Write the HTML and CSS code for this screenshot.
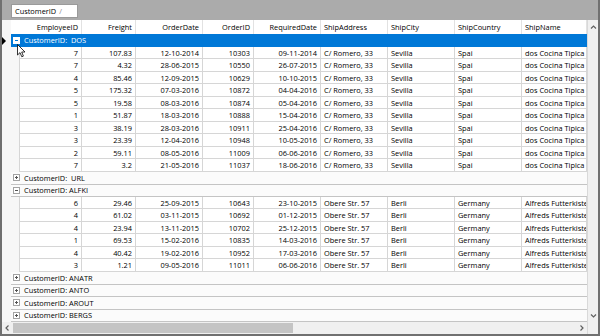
FILE: index.html
```html
<!DOCTYPE html>
<html lang="en">
<head>
  <meta charset="UTF-8">
  <meta name="viewport" content="width=device-width, initial-scale=1.0">
  <title>Orders grid</title>
  <link rel="stylesheet" href="styles.css">
</head>
<body>
  <div class="grid">
    <div class="group-panel">
      <div class="group-chip">CustomerID <span class="sort-mark">/</span></div>
    </div>
    <div class="grid-body">
      <div class="grid-main">
        <div class="rows" id="rows">
          <div class="row header-row">
            <div class="indicator"></div>
            <div class="hcell num first">EmployeeID</div>
            <div class="hcell num">Freight</div>
            <div class="hcell num">OrderDate</div>
            <div class="hcell num">OrderID</div>
            <div class="hcell num">RequiredDate</div>
            <div class="hcell">ShipAddress</div>
            <div class="hcell">ShipCity</div>
            <div class="hcell">ShipCountry</div>
            <div class="hcell">ShipName</div>
          </div>
        </div>
        <div class="hscroll">
          <svg class="arrow" width="11" height="12" viewBox="0 0 11 12"><path d="M6.5 3.5 L4 6 L6.5 8.5" fill="none" stroke="#606060" stroke-width="1.2"/></svg>
          <div class="htrack"><div class="hthumb"></div></div>
          <svg class="arrow" width="11" height="12" viewBox="0 0 11 12"><path d="M4.5 3.5 L7 6 L4.5 8.5" fill="none" stroke="#606060" stroke-width="1.2"/></svg>
        </div>
      </div>
      <div class="vscroll">
        <svg class="arrow" width="11" height="14" viewBox="0 0 11 14"><path d="M3 8.5 L5.5 6 L8 8.5" fill="none" stroke="#606060" stroke-width="1.2"/></svg>
        <div class="vtrack"></div>
        <svg class="arrow" width="11" height="12" viewBox="0 0 11 12"><path d="M3 4.5 L5.5 7 L8 4.5" fill="none" stroke="#606060" stroke-width="1.2"/></svg>
        <div class="corner"></div>
      </div>
    </div>
    <svg class="cursor" width="9" height="14" viewBox="0 0 9 14">
      <path d="M0.5 0.5 L0.5 11 L3 8.6 L4.8 12.8 L6.4 12.1 L4.7 8 L8 8 Z" fill="#fff" stroke="#000" stroke-width="0.8"/>
    </svg>
  </div>

  <script>
    let rows = document.getElementById('rows');

    let groups = [
      { name: 'DOS', label: 'CustomerID:&nbsp; DOS', open: true, selected: true,
        address: 'C/ Romero, 33', city: 'Sevilla', country: 'Spai', ship: 'dos Cocina Tipica',
        orders: [
          ['7', '107.83', '12-10-2014', '10303', '09-11-2014'],
          ['7', '4.32', '28-06-2015', '10550', '26-07-2015'],
          ['4', '85.46', '12-09-2015', '10629', '10-10-2015'],
          ['5', '175.32', '07-03-2016', '10872', '04-04-2016'],
          ['5', '19.58', '08-03-2016', '10874', '05-04-2016'],
          ['1', '51.87', '18-03-2016', '10888', '15-04-2016'],
          ['3', '38.19', '28-03-2016', '10911', '25-04-2016'],
          ['3', '23.39', '12-04-2016', '10948', '10-05-2016'],
          ['2', '59.11', '08-05-2016', '11009', '06-06-2016'],
          ['7', '3.2', '21-05-2016', '11037', '18-06-2016']
        ] },
      { name: 'URL', label: 'CustomerID:&nbsp; URL', open: false },
      { name: 'ALFKI', label: 'CustomerID: ALFKI', open: true,
        address: 'Obere Str. 57', city: 'Berli', country: 'Germany', ship: 'Alfreds Futterkiste',
        orders: [
          ['6', '29.46', '25-09-2015', '10643', '23-10-2015'],
          ['4', '61.02', '03-11-2015', '10692', '01-12-2015'],
          ['4', '23.94', '13-11-2015', '10702', '25-12-2015'],
          ['1', '69.53', '15-02-2016', '10835', '14-03-2016'],
          ['4', '40.42', '19-02-2016', '10952', '17-03-2016'],
          ['3', '1.21', '09-05-2016', '11011', '06-06-2016']
        ] },
      { name: 'ANATR', label: 'CustomerID: ANATR', open: false },
      { name: 'ANTO', label: 'CustomerID: ANTO', open: false },
      { name: 'AROUT', label: 'CustomerID: AROUT', open: false },
      { name: 'BERGS', label: 'CustomerID: BERGS', open: false }
    ];

    let html = '';
    groups.forEach(function (g) {
      html += '<div class="row group-row' + (g.selected ? ' selected' : '') + '">' +
        '<div class="indicator">' + (g.selected ? '<span class="current"></span>' : '') + '</div>' +
        '<div class="group-cell"><span class="toggle ' + (g.open ? 'open' : 'closed') + '"></span>' + g.label + '</div>' +
        '</div>';
      if (!g.open) return;
      g.orders.forEach(function (o) {
        html += '<div class="row data-row"><div class="indicator"></div><div class="indent"></div>';
        o.forEach(function (v) { html += '<div class="cell num">' + v + '</div>'; });
        html += '<div class="cell">' + g.address + '</div>' +
          '<div class="cell">' + g.city + '</div>' +
          '<div class="cell">' + g.country + '</div>' +
          '<div class="cell">' + g.ship + '</div></div>';
      });
    });
    rows.insertAdjacentHTML('beforeend', html);
  </script>
</body>
</html>
```

FILE: styles.css
```css
body {
  margin: 0;
  background: #ffffff;
  font-family: 'Open Sans', 'Noto Sans', sans-serif;
  font-size: 7.4px;
  color: #000000;
}
.grid {
  position: relative;
  width: 600px;
  height: 336px;
  box-sizing: border-box;
  border: 2px solid #707070;
  border-top: none;
  background: #f7f7f7;
  display: flex;
  flex-direction: column;
  overflow: hidden;
}
.group-panel {
  height: 20px;
  flex: none;
  box-sizing: border-box;
  padding: 4px 0 0 9px;
  background: #ababab;
}
.group-chip {
  width: 67px;
  height: 14px;
  box-sizing: border-box;
  padding-left: 3px;
  background: #ffffff;
  border: 1px solid #9a9a9a;
  line-height: 12px;
}
.sort-mark {
  color: #8a8a8a;
  margin-left: 1px;
}
.grid-body {
  flex: 1;
  display: flex;
  min-height: 0;
}
.grid-main {
  width: 585px;
  display: flex;
  flex-direction: column;
}
.rows {
  flex: 1;
  overflow: hidden;
  background: #ffffff;
}
.row {
  display: grid;
  grid-template-columns: 9px 9px 62px 54px 67px 51px 67px 67px 67px 67px 65px;
  height: 12.5px;
  line-height: 12px;
  white-space: nowrap;
}
.indicator {
  background: #f7f7f7;
  position: relative;
}
.current {
  position: absolute;
  left: 0;
  top: 2.5px;
  border-left: 4px solid #000;
  border-top: 4px solid transparent;
  border-bottom: 4px solid transparent;
}
.header-row {
  height: 14px;
  line-height: 14px;
  background: #ffffff;
}
.hcell {
  padding: 0 3px;
  overflow: hidden;
  border-right: 1px solid #e2e2e2;
}
.hcell.first {
  grid-column: span 2;
}
.num {
  text-align: right;
}
.group-row {
  background: #fbfbfb;
}
.group-cell {
  grid-column: span 10;
  box-sizing: border-box;
  border-bottom: 1px solid #c4c4c4;
  display: flex;
  align-items: center;
  padding-left: 2px;
}
.toggle {
  position: relative;
  width: 7px;
  height: 7px;
  box-sizing: border-box;
  border: 1px solid #a3a3a3;
  background: #ffffff;
  margin-right: 4px;
}
.toggle::before,
.toggle.closed::after {
  content: '';
  position: absolute;
  background: #555;
}
.toggle::before {
  left: 1px;
  top: 2px;
  width: 3px;
  height: 1px;
}
.toggle.closed::after {
  left: 2px;
  top: 1px;
  width: 1px;
  height: 3px;
}
.selected .group-cell {
  background: #0078d7;
  color: #ffffff;
  border-bottom-color: #0078d7;
}
.selected .toggle {
  border-color: #ffffff;
}
.selected .toggle::before {
  background: #0078d7;
}
.indent {
  background: #f7f7f7;
  border-right: 1px solid #d6d6d6;
}
.cell {
  padding: 0 3px;
  overflow: hidden;
  box-sizing: border-box;
  border-right: 1px solid #d6d6d6;
  border-bottom: 1px solid #d6d6d6;
}
.hscroll {
  height: 12px;
  flex: none;
  display: flex;
  align-items: center;
  background: #f0f0f0;
}
.htrack {
  flex: 1;
  height: 100%;
  padding: 1px 0;
  box-sizing: border-box;
}
.hthumb {
  width: 280px;
  height: 100%;
  background: #c4c4c4;
}
.vscroll {
  width: 11px;
  display: flex;
  flex-direction: column;
  background: #f0f0f0;
  border-left: 1px solid #d9d9d9;
}
.vtrack {
  flex: 1;
}
.corner {
  height: 12px;
  background: #f0f0f0;
}
.arrow {
  flex: none;
  display: block;
}
.cursor {
  position: absolute;
  left: 15px;
  top: 44px;
}
```
